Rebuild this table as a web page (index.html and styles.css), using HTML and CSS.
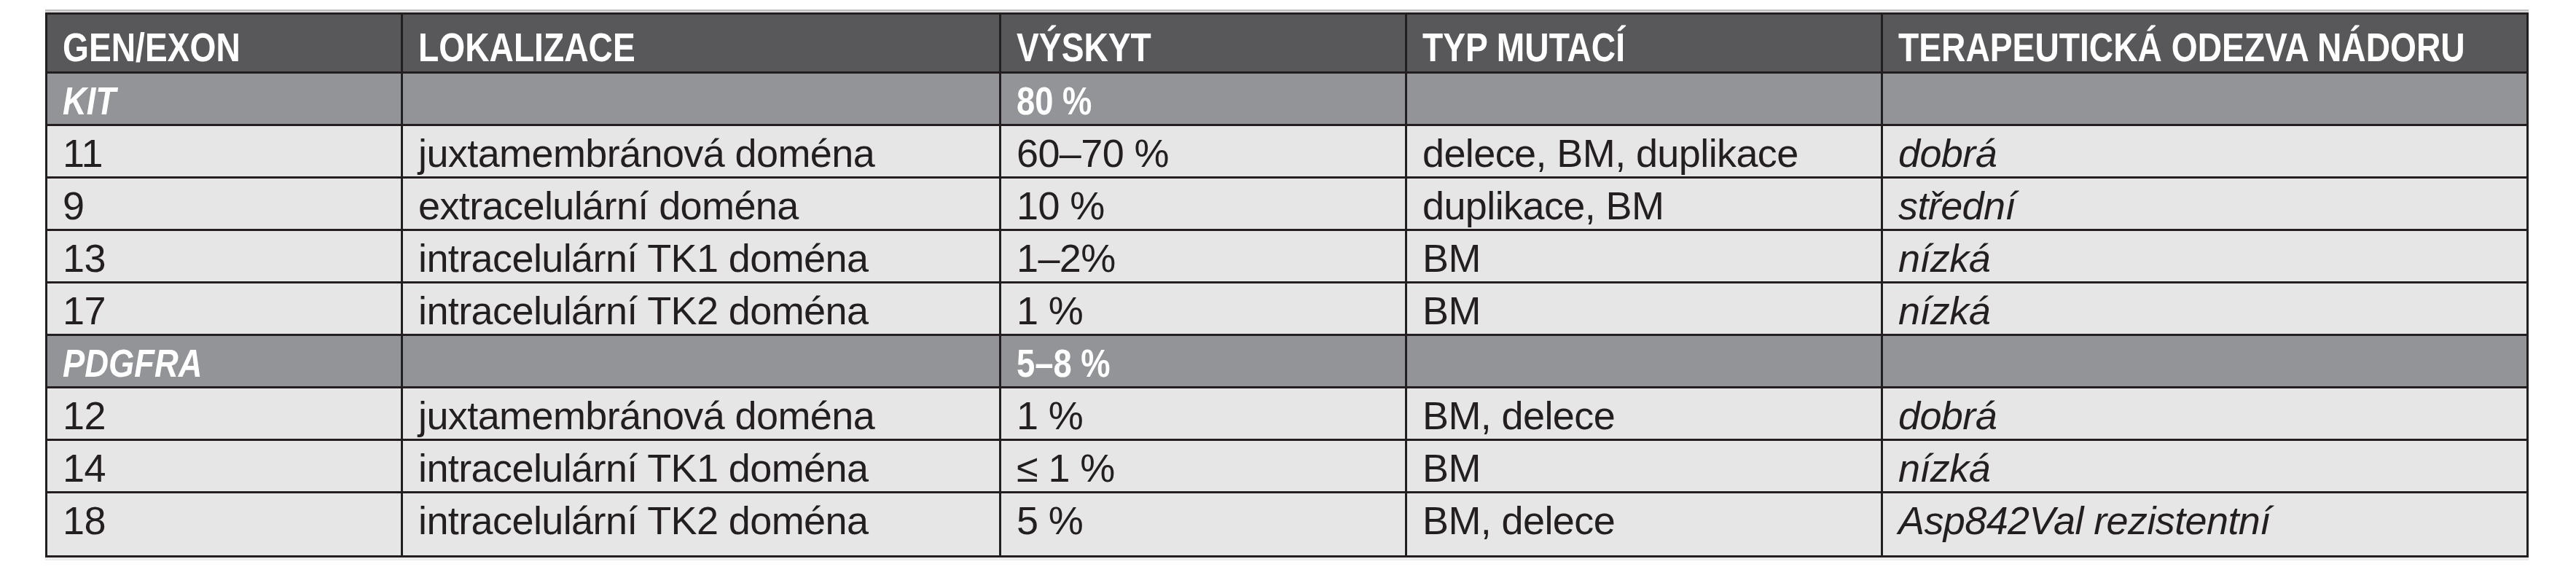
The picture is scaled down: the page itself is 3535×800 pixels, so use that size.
FILE: index.html
```html
<!DOCTYPE html>
<html lang="cs">
<head>
<meta charset="utf-8">
<title>GIST mutace</title>
<link rel="stylesheet" href="styles.css">
</head>
<body>
<div class="page">
  <div class="frame">
    <table class="mut">
      <colgroup>
        <col class="c1"><col class="c2"><col class="c3"><col class="c4"><col class="c5">
      </colgroup>
      <thead>
        <tr class="head">
          <th><span class="cond">GEN/EXON</span></th>
          <th><span class="cond">LOKALIZACE</span></th>
          <th><span class="cond">VÝSKYT</span></th>
          <th><span class="cond">TYP MUTACÍ</span></th>
          <th><span class="cond">TERAPEUTICKÁ ODEZVA NÁDORU</span></th>
        </tr>
      </thead>
      <tbody>
        <tr class="group">
          <td class="gene"><span class="cond">KIT</span></td><td></td><td><span class="cond">80 %</span></td><td></td><td></td>
        </tr>
        <tr>
          <td>11</td><td>juxtamembránová doména</td><td>60–70 %</td><td>delece, BM, duplikace</td><td class="resp">dobrá</td>
        </tr>
        <tr>
          <td>9</td><td>extracelulární doména</td><td>10 %</td><td>duplikace, BM</td><td class="resp">střední</td>
        </tr>
        <tr>
          <td>13</td><td>intracelulární TK1 doména</td><td>1–2%</td><td>BM</td><td class="resp">nízká</td>
        </tr>
        <tr>
          <td>17</td><td>intracelulární TK2 doména</td><td>1 %</td><td>BM</td><td class="resp">nízká</td>
        </tr>
        <tr class="group">
          <td class="gene"><span class="cond">PDGFRA</span></td><td></td><td><span class="cond">5–8 %</span></td><td></td><td></td>
        </tr>
        <tr>
          <td>12</td><td>juxtamembránová doména</td><td>1 %</td><td>BM, delece</td><td class="resp">dobrá</td>
        </tr>
        <tr>
          <td>14</td><td>intracelulární TK1 doména</td><td>≤ 1 %</td><td>BM</td><td class="resp">nízká</td>
        </tr>
        <tr class="last">
          <td>18</td><td>intracelulární TK2 doména</td><td>5 %</td><td>BM, delece</td><td class="resp">Asp842Val rezistentní</td>
        </tr>
      </tbody>
    </table>
  </div>
</div>
</body>
</html>
```
FILE: styles.css
```css
html, body {
  margin: 0;
  padding: 0;
  background: #ffffff;
}

.page {
  padding: 13px 0 0 62px;
}

.frame {
  display: inline-block;
  border-top: 3px solid #c2c2c4;
  padding-top: 1px;
  box-shadow: 0 4px 0 #ececec;
}

.mut {
  border-collapse: collapse;
  table-layout: fixed;
  width: 3405px;
  border: 3px solid #231f20;
  font-family: "Liberation Sans", Arial, sans-serif;
  font-size: 54px;
  line-height: 1;
  color: #231f20;
  letter-spacing: -0.6px;
}

.c1 { width: 488px; }
.c2 { width: 821px; }
.c3 { width: 557px; }
.c4 { width: 653px; }
.c5 { width: 886px; }

.mut th,
.mut td {
  border: 3px solid #231f20;
  text-align: left;
  vertical-align: top;
  padding: 10px 20px 0 21px;
  white-space: nowrap;
}

.cond {
  display: inline-block;
  transform: scaleX(0.84);
  transform-origin: left center;
  letter-spacing: 0;
}

.mut tbody tr {
  height: 72px;
  background: #e6e6e6;
}

.mut tbody tr.last {
  height: 88px;
}

.mut tr.head {
  height: 81px;
  background: #58585a;
}

.mut th {
  font-weight: bold;
  font-size: 55px;
  color: #ffffff;
  padding-top: 18px;
}

.mut tr.group {
  background: #929497;
}

.mut tr.group td {
  font-weight: bold;
  color: #ffffff;
}

.mut tr.group td.gene {
  font-style: italic;
}

.mut td.resp {
  font-style: italic;
}
```
